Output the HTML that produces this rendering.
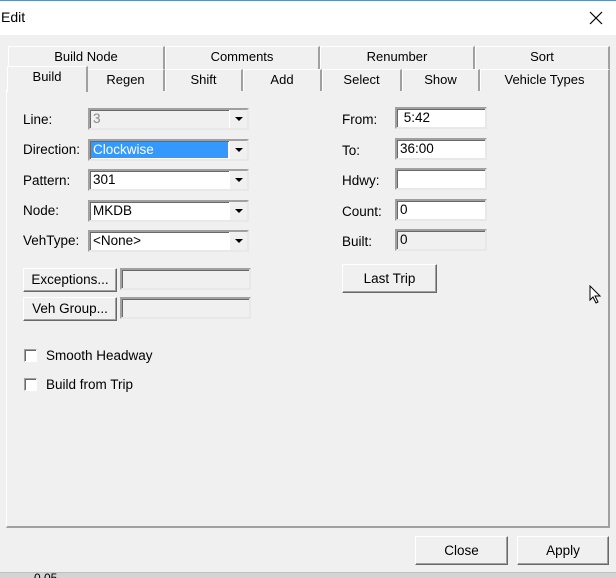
<!DOCTYPE html>
<html><head><meta charset="utf-8"><style>
*{box-sizing:border-box;margin:0;padding:0}
body{width:616px;height:578px;background:#f0f0f0;font:13.5px "Liberation Sans",sans-serif;color:#000;position:relative;overflow:hidden}
.a{position:absolute}
.title{left:0;top:0;width:616px;height:35px;background:#fff;border-top:1px solid #5a8fc8}
.tab{position:absolute;background:#f0f0f0;border:1px solid #fff;border-right:2px solid #a0a0a0;border-bottom:none;text-align:center;line-height:20px;font-size:13px}
.panel{left:6px;top:90px;width:604px;height:438px;border:1px solid #fff;border-right:2px solid #a0a0a0;border-bottom:2px solid #a0a0a0}
.lbl{position:absolute;line-height:16px}
.cb{position:absolute;height:22px;background:#fff;border:2px solid;border-color:#a0a0a0 #e8e8e8 #e8e8e8 #a0a0a0;box-shadow:inset 1px 1px 0 #696969;padding-left:3px;line-height:18px}
.cb .arr{position:absolute;right:0;top:0;width:18px;height:18px;background:#f0f0f0;border-left:1px solid #fff}
.cb .arr:after{content:"";position:absolute;left:5px;top:7px;border:4px solid transparent;border-top:4px solid #000;border-bottom:none}
.ed{position:absolute;height:22px;background:#fff;border:2px solid;border-color:#a0a0a0 #e8e8e8 #e8e8e8 #a0a0a0;box-shadow:inset 1px 1px 0 #696969;padding-left:3px;line-height:18px}
.btn{position:absolute;background:#f0f0f0;border:1px solid;border-color:#fff #696969 #696969 #fff;box-shadow:inset -1px -1px 0 #a0a0a0;text-align:center}
.chk{position:absolute;width:13px;height:13px;background:#fff;border:1px solid;border-color:#a0a0a0 #fff #fff #a0a0a0;box-shadow:inset 1px 1px 0 #696969}
</style></head><body>
<div class="a title"></div>
<div class="a" style="left:1px;top:9px;font-size:14px">Edit</div>
<svg class="a" style="left:589px;top:11px" width="14" height="14"><path d="M1 1L13 13M13 1L1 13" stroke="#000" stroke-width="1.2"/></svg>

<div class="tab" style="left:8px;top:46px;width:157px;height:23px">Build Node</div>
<div class="tab" style="left:165px;top:46px;width:155px;height:23px">Comments</div>
<div class="tab" style="left:320px;top:46px;width:155px;height:23px">Renumber</div>
<div class="tab" style="left:475px;top:46px;width:135px;height:23px">Sort</div>

<div class="a panel"></div>
<div class="tab" style="left:87px;top:69px;width:78px;height:22px">Regen</div>
<div class="tab" style="left:165px;top:69px;width:78px;height:22px">Shift</div>
<div class="tab" style="left:243px;top:69px;width:79px;height:22px">Add</div>
<div class="tab" style="left:322px;top:69px;width:80px;height:22px">Select</div>
<div class="tab" style="left:402px;top:69px;width:78px;height:22px">Show</div>
<div class="tab" style="left:480px;top:69px;width:130px;height:22px">Vehicle Types</div>
<div class="tab" style="left:7px;top:66px;width:81px;height:26px;line-height:20px;z-index:2">Build</div>

<div class="lbl" style="left:23px;top:112px">Line:</div>
<div class="cb" style="left:88px;top:108px;width:161px;background:#f0f0f0;color:#888">3<div class="arr" style="background:#f0f0f0"></div></div>
<div class="lbl" style="left:23px;top:142px">Direction:</div>
<div class="cb" style="left:88px;top:139px;width:161px"><span class="a" style="left:1px;top:1px;width:137px;height:16px;background:#3399ff;color:#fff;line-height:16px;padding-left:2px">Clockwise</span><div class="arr"></div></div>
<div class="lbl" style="left:23px;top:173px">Pattern:</div>
<div class="cb" style="left:88px;top:169px;width:161px">301<div class="arr"></div></div>
<div class="lbl" style="left:23px;top:203px">Node:</div>
<div class="cb" style="left:88px;top:200px;width:161px">MKDB<div class="arr"></div></div>
<div class="lbl" style="left:23px;top:233px">VehType:</div>
<div class="cb" style="left:88px;top:230px;width:161px">&lt;None&gt;<div class="arr"></div></div>

<div class="btn" style="left:23px;top:268px;width:94px;height:24px;line-height:22px">Exceptions...</div>
<div class="ed" style="left:120px;top:268px;width:131px;background:#f0f0f0"></div>
<div class="btn" style="left:23px;top:297px;width:94px;height:24px;line-height:22px">Veh Group...</div>
<div class="ed" style="left:120px;top:297px;width:131px;background:#f0f0f0"></div>

<div class="chk" style="left:24px;top:349px"></div>
<div class="lbl" style="left:46px;top:348px">Smooth Headway</div>
<div class="chk" style="left:24px;top:378px"></div>
<div class="lbl" style="left:46px;top:377px">Build from Trip</div>

<div class="lbl" style="left:342px;top:112px">From:</div>
<div class="ed" style="left:395px;top:107px;width:92px">&nbsp;5:42</div>
<div class="lbl" style="left:342px;top:143px">To:</div>
<div class="ed" style="left:395px;top:138px;width:92px">36:00</div>
<div class="lbl" style="left:342px;top:173px">Hdwy:</div>
<div class="ed" style="left:395px;top:168px;width:92px"></div>
<div class="lbl" style="left:342px;top:204px">Count:</div>
<div class="ed" style="left:395px;top:199px;width:92px">0</div>
<div class="lbl" style="left:342px;top:234px">Built:</div>
<div class="ed" style="left:395px;top:229px;width:92px;background:#f0f0f0">0</div>
<div class="btn" style="left:342px;top:264px;width:95px;height:29px;line-height:27px">Last Trip</div>

<svg class="a" style="left:589px;top:285px" width="14" height="20"><path d="M1 1L1 15L4 12L7 18L9 17L6 11L11 11Z" fill="#fff" stroke="#000" stroke-width="1"/></svg>

<div class="btn" style="left:415px;top:536px;width:93px;height:29px;line-height:27px">Close</div>
<div class="btn" style="left:517px;top:536px;width:92px;height:29px;line-height:27px">Apply</div>

<div class="a" style="left:0;top:572px;width:616px;height:6px;background:#d4d4d4;border-top:1px solid #c0c0c0;overflow:hidden"><span class="a" style="left:34px;top:-1px;font-size:12px;line-height:12px">0.05</span></div>
</body></html>
